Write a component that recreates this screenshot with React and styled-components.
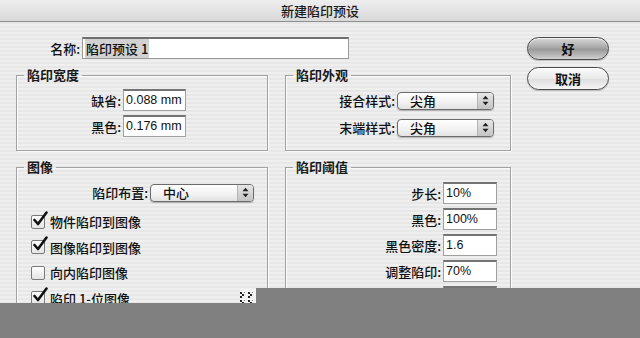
import React from "react";
import styled, { createGlobalStyle } from "styled-components";

const GlobalStyle = createGlobalStyle`
  html, body {
    margin: 0;
    padding: 0;
    background: #808080;
  }
  * {
    box-sizing: border-box;
  }
`;

const CJK = `"Noto Sans CJK SC", "Liberation Sans", sans-serif`;
const LATIN = `"Liberation Sans", "Noto Sans CJK SC", sans-serif`;

function Checkbox({ checked }) {
    return (
        <CheckBox>
            {checked && (
                <svg width="18" height="18" viewBox="0 0 18 18">
                    <path d="M3.5 9 L7 13 L15.5 1.5" fill="none" stroke="#111" strokeWidth="2.6" strokeLinecap="round" strokeLinejoin="round" />
                </svg>
            )}
        </CheckBox>
    );
}

function PopUp({ value, width }) {
    return (
        <Select $w={width}>
            <SelectText>{value}</SelectText>
            <SelectArrows>
                <svg width="7" height="11" viewBox="0 0 7 11">
                    <path d="M0.5 4.2 L3.5 0.8 L6.5 4.2 Z M0.5 6.8 L3.5 10.2 L6.5 6.8 Z" fill="#222" />
                </svg>
            </SelectArrows>
        </Select>
    );
}

function Group({ title, children, top }) {
    return (
        <Fieldset>
            <Legend>{title}</Legend>
            <GroupBody $top={top}>{children}</GroupBody>
        </Fieldset>
    );
}

function App() {
    return (
        <Window>
            <GlobalStyle />
            <TitleBar>新建陷印预设</TitleBar>
            <Content>
                <MainColumn>
                    <NameRow>
                        <NameLabel>名称:</NameLabel>
                        <NameInput>
                            <Selected>陷印预设 1</Selected>
                        </NameInput>
                    </NameRow>
                    <Groups>
                        <Group title="陷印宽度" top={5}>
                            <FormRow $lw={104} $gap={4}>
                                <Label>缺省:</Label>
                                <TextField $w={63}>0.088 mm</TextField>
                            </FormRow>
                            <FormRow $lw={104} $gap={4}>
                                <Label>黑色:</Label>
                                <TextField $w={63}>0.176 mm</TextField>
                            </FormRow>
                        </Group>
                        <Group title="陷印外观" top={7}>
                            <FormRow $lw={109} $gap={8}>
                                <Label>接合样式:</Label>
                                <PopUp value="尖角" width={97} />
                            </FormRow>
                            <FormRow $lw={109} $gap={8}>
                                <Label>末端样式:</Label>
                                <PopUp value="尖角" width={97} />
                            </FormRow>
                        </Group>
                        <Group title="图像" top={7}>
                            <FormRow $lw={131} $gap={7}>
                                <Label>陷印布置:</Label>
                                <PopUp value="中心" width={104} />
                            </FormRow>
                            <CheckRow><Checkbox checked />物件陷印到图像</CheckRow>
                            <CheckRow><Checkbox checked />图像陷印到图像</CheckRow>
                            <CheckRow><Checkbox />向内陷印图像</CheckRow>
                            <CheckRow><Checkbox checked />陷印 1-位图像</CheckRow>
                        </Group>
                        <Group title="陷印阈值" top={6}>
                            <FormRow $lw={155} $gap={4}>
                                <Label>步长:</Label>
                                <TextField $w={54}>10%</TextField>
                            </FormRow>
                            <FormRow $lw={155} $gap={4}>
                                <Label>黑色:</Label>
                                <TextField $w={54}>100%</TextField>
                            </FormRow>
                            <FormRow $lw={155} $gap={4}>
                                <Label>黑色密度:</Label>
                                <TextField $w={54}>1.6</TextField>
                            </FormRow>
                            <FormRow $lw={155} $gap={4}>
                                <Label>调整陷印:</Label>
                                <TextField $w={54}>70%</TextField>
                            </FormRow>
                            <FormRow $lw={155} $gap={4}>
                                <Label>陷印颜色减低:</Label>
                                <TextField $w={54}>100%</TextField>
                            </FormRow>
                        </Group>
                    </Groups>
                </MainColumn>
                <ButtonColumn>
                    <PushButton $primary>好</PushButton>
                    <PushButton>取消</PushButton>
                </ButtonColumn>
            </Content>
            <Grip>
                <svg width="16" height="16" viewBox="0 0 16 16">
                    {[0, 8].map((x) =>
                        [0, 8].map((y) => (
                            <g key={`${x}-${y}`} fill="#222">
                                <rect x={x} y={y + 1} width="2" height="2" />
                                <rect x={x + 2} y={y + 3} width="2" height="2" />
                                <rect x={x} y={y + 5} width="2" height="2" />
                                <rect x={x + 4} y={y + 1} width="1" height="1" fill="#888" />
                            </g>
                        ))
                    )}
                </svg>
            </Grip>
            <ShadeUpper />
            <ShadeLower />
        </Window>
    );
}

const Window = styled.div`
    position: relative;
    width: 640px;
    height: 338px;
    overflow: hidden;
    font-family: ${CJK};
    color: #111;
    background: repeating-linear-gradient(
        to bottom,
        #efefef 0px,
        #efefef 2px,
        #e7e7e7 2px,
        #e7e7e7 4px
    );
`

const TitleBar = styled.div`
    height: 22px;
    line-height: 21px;
    text-align: center;
    font-size: 13px;
    font-weight: 500;
    color: #1a1a1a;
    background: linear-gradient(to bottom, #eeeeee, #d9d9d9);
    border-bottom: 1px solid #8e8e8e;
`

const Content = styled.div`
    display: flex;
    padding: 15px 0 0 16px;
`

const MainColumn = styled.div`
    width: 495px;
    display: flex;
    flex-direction: column;
`

const NameRow = styled.div`
    display: flex;
    align-items: center;
    height: 22px;
`

const NameLabel = styled.div`
    width: 66px;
    text-align: right;
    padding-right: 2px;
    font-size: 13px;
    font-weight: 500;
`

const NameInput = styled.div`
    width: 267px;
    height: 22px;
    background: #fff;
    border: 1px solid #9a9a9a;
    border-top: 2px solid #6f6f6f;
    padding: 0 2px;
    font-size: 13px;
    line-height: 19px;
    font-weight: 500;
    white-space: nowrap;
`

const Selected = styled.span`
    background: #d2d2d2;
    padding: 0 1px;
`

const Groups = styled.div`
    margin-top: 7px;
    display: grid;
    grid-template-columns: 252px 226px;
    grid-template-rows: 85px 200px;
    column-gap: 17px;
    row-gap: 7px;
`

const Fieldset = styled.fieldset`
    margin: 0;
    padding: 0;
    min-width: 0;
    border: 1px solid #a2a2a2;
    box-shadow: inset 1px 1px 0 #fafafa, 1px 1px 0 #fafafa;
`

const Legend = styled.legend`
    margin-left: 7px;
    padding: 0 3px;
    font-size: 13px;
    line-height: 18px;
    font-weight: 700;
    color: #1a1a1a;
`

const GroupBody = styled.div`
    padding-top: ${(p) => p.$top}px;
    display: flex;
    flex-direction: column;
`

const FormRow = styled.div`
    display: grid;
    grid-template-columns: ${(p) => p.$lw}px auto;
    column-gap: 2px;
    align-items: center;
    margin-bottom: ${(p) => p.$gap}px;
`

const Label = styled.div`
    text-align: right;
    font-size: 13px;
    font-weight: 500;
    white-space: nowrap;
`

const TextField = styled.div`
    width: ${(p) => p.$w}px;
    height: 22px;
    background: #fff;
    border: 1px solid #a0a0a0;
    border-top: 2px solid #747474;
    padding: 0 2px;
    font-family: ${LATIN};
    font-size: 12.5px;
    line-height: 19px;
    color: #111;
    white-space: nowrap;
    overflow: hidden;
`

const Select = styled.div`
    width: ${(p) => p.$w}px;
    height: 18px;
    display: flex;
    border: 1px solid #6c6c6c;
    border-radius: 4px;
    background: linear-gradient(to bottom, #ffffff, #f1f1f1 60%, #e2e2e2);
    box-shadow: 0 1px 1px rgba(0, 0, 0, 0.25);
    overflow: hidden;
`

const SelectText = styled.div`
    flex: 1;
    padding-left: 12px;
    font-size: 13px;
    line-height: 16px;
    font-weight: 500;
`

const SelectArrows = styled.div`
    width: 16px;
    display: flex;
    align-items: center;
    justify-content: center;
    border-left: 1px solid #b4b4b4;
    background: linear-gradient(to bottom, #e6e6e6, #c4c4c4);
`

const CheckRow = styled.div`
    display: flex;
    align-items: center;
    gap: 5px;
    height: 25.5px;
    padding-left: 14px;
    font-size: 13px;
    font-weight: 500;
`

const CheckBox = styled.div`
    position: relative;
    width: 14px;
    height: 14px;
    flex: none;
    background: linear-gradient(to bottom, #ffffff, #e4e4e4);
    border: 1px solid #7a7a7a;
    border-radius: 2px;

    svg {
        position: absolute;
        left: -1px;
        top: -5px;
    }
`

const ButtonColumn = styled.div`
    margin-left: 16px;
    display: flex;
    flex-direction: column;
    gap: 7px;
`

const PushButton = styled.div`
    width: 82px;
    height: 23px;
    border-radius: 12px;
    border: 1px solid #4a4a4a;
    text-align: center;
    font-size: 13px;
    line-height: 21px;
    font-weight: 700;
    color: #111;
    background: ${(p) =>
        p.$primary
            ? "linear-gradient(to bottom, #d6d6d6 0%, #a9a9a9 45%, #9a9a9a 55%, #cfcfcf 100%)"
            : "linear-gradient(to bottom, #fbfbfb 0%, #e9e9e9 50%, #dedede 55%, #f6f6f6 100%)"};
    box-shadow: inset 0 1px 1px rgba(255, 255, 255, 0.7), 0 1px 1px rgba(0, 0, 0, 0.2);
`

const Grip = styled.div`
    position: absolute;
    left: 240px;
    top: 288px;
    width: 16px;
    height: 15px;
    overflow: hidden;
    background: #f2f2f2;
`

const ShadeUpper = styled.div`
    position: absolute;
    left: 256px;
    right: 0;
    top: 288px;
    bottom: 0;
    background: #808080;
`

const ShadeLower = styled.div`
    position: absolute;
    left: 0;
    right: 0;
    top: 303px;
    bottom: 0;
    background: #808080;
`

export default App;
